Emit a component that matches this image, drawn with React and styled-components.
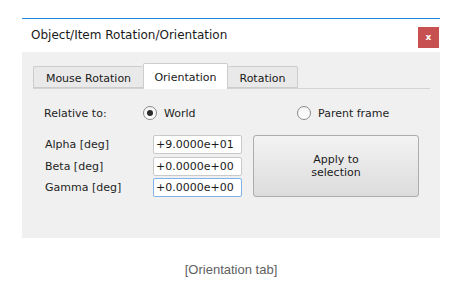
import React from "react";
import styled, { createGlobalStyle } from "styled-components";

const GlobalStyle = createGlobalStyle`
  body {
    margin: 0;
    background: #ffffff;
    font-family: "DejaVu Sans", Verdana, sans-serif;
  }
`;

const Page = styled.div`
  padding: 18px 0 0 22px;
  width: 418px;
`;

const Window = styled.div`
  border-top: 1px solid #1e88e5;
  background: #ffffff;
`;

const TitleBar = styled.div`
  display: flex;
  align-items: flex-start;
  justify-content: space-between;
  padding: 8px 1px 4px 9px;
  height: 21px;
  .title {
    font-size: 12px;
    color: #1a1a1a;
    line-height: 17px;
  }
`;

const CloseButton = styled.button`
  width: 21px;
  height: 21px;
  border: none;
  padding: 0;
  background: #c75050;
  color: #ffffff;
  font-family: "DejaVu Sans", sans-serif;
  font-size: 9px;
  font-weight: bold;
  line-height: 19px;
`;

const Body = styled.div`
  background: #f0f0f0;
  height: 175px;
  padding: 11px 10px 0 11px;
`;

const TabBar = styled.div`
  display: flex;
  align-items: flex-end;
  height: 25px;
  border-bottom: 1px solid #d4d4d4;
`;

const Tab = styled.div`
  box-sizing: border-box;
  width: ${(p) => p.width}px;
  height: ${(p) => (p.active ? 26 : 22)}px;
  margin-bottom: ${(p) => (p.active ? -1 : 0)}px;
  border: 1px solid #cdcdcd;
  border-bottom: ${(p) => (p.active ? "none" : "1px solid #cdcdcd")};
  border-left: ${(p) => (p.first || p.active ? "1px solid #cdcdcd" : "none")};
  border-right: ${(p) => (p.beforeActive ? "none" : "1px solid #cdcdcd")};
  border-radius: 2px 2px 0 0;
  background: ${(p) => (p.active ? "#ffffff" : "#e9e9e9")};
  display: flex;
  align-items: center;
  justify-content: center;
  padding-top: ${(p) => (p.active ? 1 : 2)}px;
  font-size: 11px;
  color: #1a1a1a;
`;

const Pane = styled.div`
  padding: 15px 0 0 11px;
  font-size: 11px;
  color: #1e1e1e;
`;

const RadioRow = styled.div`
  display: flex;
  align-items: center;
  height: 18px;
  .label {
    width: 99px;
  }
`;

const RadioOption = styled.label`
  display: flex;
  align-items: center;
  gap: 7px;
  width: ${(p) => p.width || "auto"};
`;

const RadioCircle = styled.span`
  box-sizing: border-box;
  width: 14px;
  height: 14px;
  border-radius: 50%;
  border: 1px solid #8a8a8a;
  background: linear-gradient(#f4f4f4, #ffffff);
  display: flex;
  align-items: center;
  justify-content: center;
  &::after {
    content: "";
    width: 6px;
    height: 6px;
    border-radius: 50%;
    background: ${(p) => (p.checked ? "#2a2a2a" : "transparent")};
  }
`;

const FormArea = styled.div`
  display: flex;
  gap: 11px;
  margin-top: 13px;
`;

const Fields = styled.div`
  display: grid;
  grid-template-columns: 108px 89px;
  row-gap: 2.5px;
  align-items: center;
  padding-left: 1px;
`;

const Field = styled.div`
  box-sizing: border-box;
  height: 19px;
  border: 1px solid ${(p) => (p.focused ? "#7eb4ea" : "#c9c9c9")};
  border-radius: 2px;
  background: #ffffff;
  padding: 0 2px;
  line-height: 17px;
  font-size: 11px;
  color: #1a1a1a;
  white-space: nowrap;
`;

const ApplyButton = styled.button`
  box-sizing: border-box;
  width: 166px;
  height: 62px;
  border: 1px solid #adadad;
  border-radius: 3px;
  background: linear-gradient(#f3f3f3, #dcdcdc);
  font-family: "DejaVu Sans", sans-serif;
  font-size: 11px;
  line-height: 13px;
  color: #1a1a1a;
  padding: 0;
`;

const Caption = styled.div`
  width: 418px;
  margin-top: 24px;
  text-align: center;
  font-family: "Liberation Sans", Arial, sans-serif;
  font-size: 13px;
  line-height: 15px;
  color: #5f5f5f;
`;

const fields = [
  { label: "Alpha [deg]", value: "+9.0000e+01" },
  { label: "Beta [deg]", value: "+0.0000e+00" },
  { label: "Gamma [deg]", value: "+0.0000e+00", focused: true },
];

export default function App() {
  return (
    <>
      <GlobalStyle />
      <Page>
        <Window>
          <TitleBar>
            <span className="title">Object/Item Rotation/Orientation</span>
            <CloseButton>x</CloseButton>
          </TitleBar>
          <Body>
            <TabBar>
              <Tab width={110} first beforeActive>
                Mouse Rotation
              </Tab>
              <Tab width={85} active>
                Orientation
              </Tab>
              <Tab width={70}>Rotation</Tab>
            </TabBar>
            <Pane>
              <RadioRow>
                <span className="label">Relative to:</span>
                <RadioOption width="154px">
                  <RadioCircle checked />
                  World
                </RadioOption>
                <RadioOption>
                  <RadioCircle />
                  Parent frame
                </RadioOption>
              </RadioRow>
              <FormArea>
                <Fields>
                  {fields.map((f) => (
                    <React.Fragment key={f.label}>
                      <span>{f.label}</span>
                      <Field focused={f.focused}>{f.value}</Field>
                    </React.Fragment>
                  ))}
                </Fields>
                <ApplyButton>
                  Apply to
                  <br />
                  selection
                </ApplyButton>
              </FormArea>
            </Pane>
          </Body>
        </Window>
        <Caption>[Orientation tab]</Caption>
      </Page>
    </>
  );
}
